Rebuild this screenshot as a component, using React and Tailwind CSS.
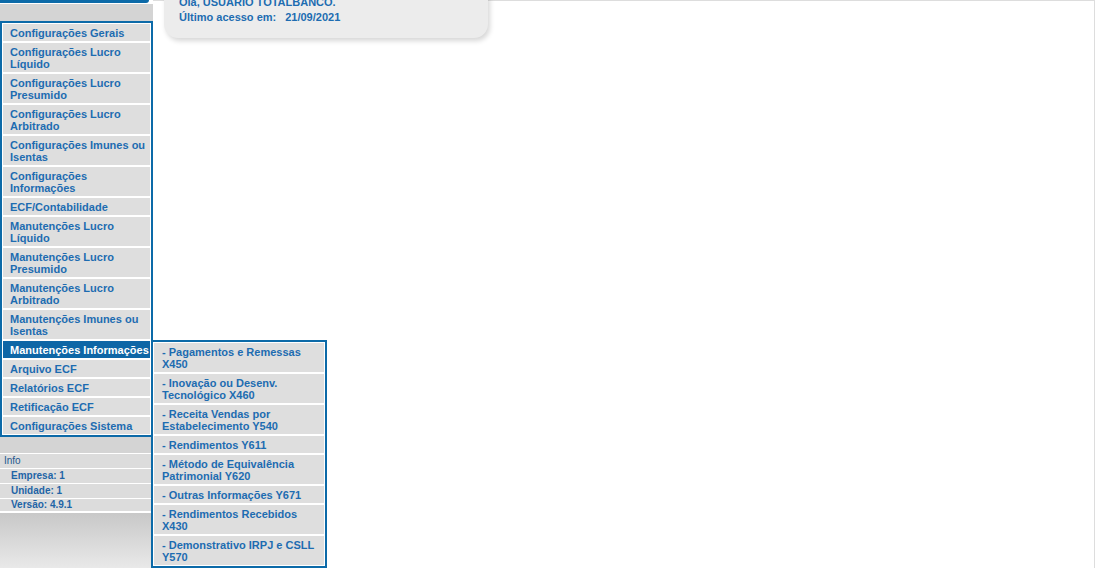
const menu = [
  ['Configurações Gerais'],
  ['Configurações Lucro', 'Líquido'],
  ['Configurações Lucro', 'Presumido'],
  ['Configurações Lucro', 'Arbitrado'],
  ['Configurações Imunes ou', 'Isentas'],
  ['Configurações', 'Informações'],
  ['ECF/Contabilidade'],
  ['Manutenções Lucro', 'Líquido'],
  ['Manutenções Lucro', 'Presumido'],
  ['Manutenções Lucro', 'Arbitrado'],
  ['Manutenções Imunes ou', 'Isentas'],
  ['Manutenções Informações'],
  ['Arquivo ECF'],
  ['Relatórios ECF'],
  ['Retificação ECF'],
  ['Configurações Sistema'],
];

const submenu = [
  ['- Pagamentos e Remessas', 'X450'],
  ['- Inovação ou Desenv.', 'Tecnológico X460'],
  ['- Receita Vendas por', 'Estabelecimento Y540'],
  ['- Rendimentos Y611'],
  ['- Método de Equivalência', 'Patrimonial Y620'],
  ['- Outras Informações Y671'],
  ['- Rendimentos Recebidos', 'X430'],
  ['- Demonstrativo IRPJ e CSLL', 'Y570'],
];

const ACTIVE = 'Manutenções Informações';

function MenuItem({ lines, active, sub }) {
  return (
    <div
      className={
        'pt-[3px] pb-[2px] text-[11px] leading-[12px] font-bold whitespace-nowrap ' +
        (sub ? 'pl-[8px] ' : 'pl-[7px] ') +
        (active ? 'bg-[#0e66a6] text-white' : 'bg-[#dedede] text-[#1d6cb1]')
      }
    >
      {lines.map((l, i) => (
        <div key={i}>{l}</div>
      ))}
    </div>
  );
}

function InfoRow({ children, indent, last }) {
  return (
    <div
      className={
        'h-[15px] border-t border-white bg-[#dcdcdc] flex items-center ' +
        (indent ? 'pl-[11px] font-bold text-[#1f64a6] ' : 'pl-[4px] text-[#24588e] ') +
        (last ? 'border-b-2' : '')
      }
    >
      <span className="text-[10px] leading-[12px]">{children}</span>
    </div>
  );
}

export default function App() {
  return (
    <div className="relative flex h-[568px] w-[1095px] overflow-hidden bg-white font-['Liberation_Sans',Arial,sans-serif]">
      {/* left navigation column */}
      <aside className="flex w-[153px] shrink-0 flex-col">
        <div className="h-[3px] w-[149px] rounded-br-[6px] bg-[#0c6aa8]" />
        <div className="mt-[1px] flex flex-1 flex-col bg-[#d4d4d4]">
          <div className="h-[17px]" />
          <nav className="flex flex-col gap-[2px] border-2 border-[#0c6aa8] bg-white p-[1px]">
            {menu.map((lines) => (
              <MenuItem key={lines.join(' ')} lines={lines} active={lines[0] === ACTIVE} />
            ))}
          </nav>
          <div className="h-[16px]" />
          <InfoRow>Info</InfoRow>
          <InfoRow indent>Empresa: 1</InfoRow>
          <InfoRow indent>Unidade: 1</InfoRow>
          <InfoRow indent last>Versão: 4.9.1</InfoRow>
          <div className="flex-1 bg-linear-to-b from-[#c8c8c8] to-[#e9e9e9]" />
        </div>
      </aside>

      {/* content area */}
      <main className="flex-1 border-t border-r border-[#dddddd]">
        <div className="ml-[11px] mt-[-6px] w-[324px] rounded-b-[14px] bg-[#ececec] px-[15px] pb-[13px] text-[11px] leading-[15px] font-bold text-[#1d6cb1] shadow-[2px_3px_5px_rgba(0,0,0,0.16)]">
          <div>Olá, USUARIO TOTALBANCO.</div>
          <div>
            Último acesso em:<span className="ml-[9px]">21/09/2021</span>
          </div>
        </div>
      </main>

      {/* flyout submenu */}
      <div className="absolute left-[151px] top-[340px] flex w-[176px] flex-col gap-[2px] border-2 border-[#0c6aa8] bg-white p-[1px]">
        {submenu.map((lines) => (
          <MenuItem key={lines.join(' ')} lines={lines} sub />
        ))}
      </div>
    </div>
  );
}
